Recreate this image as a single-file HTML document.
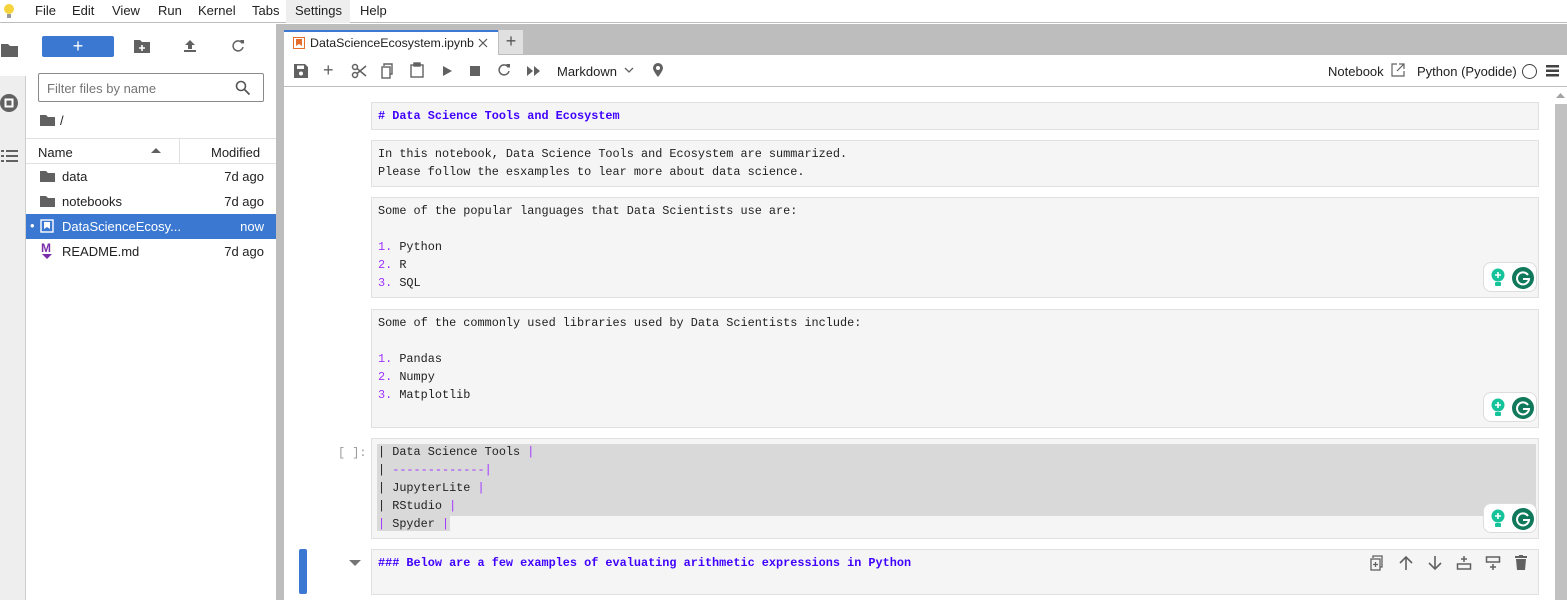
<!DOCTYPE html>
<html><head><meta charset="utf-8"><style>
*{box-sizing:border-box;margin:0;padding:0}
body{width:1567px;height:600px;overflow:hidden;font-family:"Liberation Sans",sans-serif;font-size:13px;color:#212121;background:#fff;position:relative}
.abs{position:absolute}
.menu{left:0;top:0;width:1567px;height:23px;background:#fff;border-bottom:1px solid #bdbdbd}
.menu span{position:absolute;top:3px;font-size:13px}
.mono{font-family:"Liberation Mono",monospace;font-size:11.85px}
.cell{position:absolute;left:371px;width:1168px;background:#f5f5f5;border:1px solid #e0e0e0}
.cell .t{position:absolute;left:6px;top:4px;line-height:18px;white-space:pre}
.h{color:#3f00ff;font-weight:bold}
.n{color:#a033ff}
.g{position:absolute;left:1483px;width:54px;height:30px;background:#fff;border:1px solid #ddd;border-radius:8px}
.file{position:absolute;left:26px;width:250px;height:25px}
.file .nm{position:absolute;left:36px;top:5px}
.file .d{position:absolute;right:12px;top:5px}
</style></head><body>
<div class="abs menu">
 <svg class="abs" style="left:3px;top:3px" width="12" height="16"><circle cx="6" cy="6" r="5" fill="#f5d33a"/><rect x="4" y="11" width="4" height="4" fill="#999"/></svg>
 <span style="left:35px">File</span><span style="left:72px">Edit</span><span style="left:112px">View</span><span style="left:158px">Run</span><span style="left:198px">Kernel</span><span style="left:252px">Tabs</span>
 <span style="left:286px;top:0;height:23px;width:64px;background:#eee;padding:3px 9px">Settings</span><span style="left:360px">Help</span>
</div>
<div class="abs" style="left:0;top:24px;width:26px;height:576px;background:#eeeeee;border-right:1px solid #ccc"></div>
<div class="abs" style="left:0;top:24px;width:26px;height:52px;background:#fff"></div>
<svg class="abs" style="left:0;top:42px" width="20" height="16"><path d="M1 2h7l2 2h8v11H1z" fill="#616161"/></svg>
<svg class="abs" style="left:0;top:92px" width="20" height="22"><circle cx="9" cy="11" r="9" fill="#616161"/><rect x="4.5" y="6.5" width="9" height="9" fill="#fff"/><rect x="6.5" y="8.5" width="5" height="5" fill="#616161"/></svg>
<svg class="abs" style="left:0;top:148px" width="20" height="16" fill="#616161"><rect x="1" y="2" width="3" height="2"/><rect x="6" y="2" width="12" height="2"/><rect x="1" y="7" width="3" height="2"/><rect x="6" y="7" width="12" height="2"/><rect x="1" y="12" width="3" height="2"/><rect x="6" y="12" width="12" height="2"/></svg>
<div class="abs" style="left:26px;top:24px;width:250px;height:576px;background:#fff"></div>
<div class="abs" style="left:42px;top:36px;width:72px;height:21px;background:#3a78d1;border-radius:2px;color:#fff;text-align:center;font-size:18px;line-height:20px">+</div>
<svg class="abs" style="left:134px;top:39px" width="16" height="14"><path d="M0 1h6l2 2h8v11H0z" fill="#616161"/><path d="M8 6v6M5 9h6" stroke="#fff" stroke-width="1.6"/></svg>
<svg class="abs" style="left:183px;top:39px" width="14" height="14" fill="#616161"><path d="M7 1l5 5H9v4H5V6H2z"/><rect x="1" y="11" width="12" height="2"/></svg>
<svg class="abs" style="left:231px;top:39px" width="14" height="14"><path d="M11.5 4.5A5 5 0 1 0 12 8" stroke="#616161" stroke-width="1.5" fill="none"/><path d="M9 1l4 0 0 4z" fill="#616161"/></svg>
<div class="abs" style="left:38px;top:73px;width:226px;height:29px;border:1px solid #8a8a8a;border-radius:2px;color:#757575;padding:7px 8px">Filter files by name</div>
<svg class="abs" style="left:235px;top:80px" width="16" height="16"><circle cx="6" cy="6" r="4.5" stroke="#555" stroke-width="1.6" fill="none"/><path d="M9.5 9.5l5 5" stroke="#555" stroke-width="1.8"/></svg>
<svg class="abs" style="left:40px;top:114px" width="16" height="13"><path d="M0 1h6l2 2h7v9H0z" fill="#616161"/></svg>
<span class="abs" style="left:60px;top:113px">/</span>
<div class="abs" style="left:26px;top:138px;width:250px;height:26px;border-top:1px solid #e0e0e0;border-bottom:1px solid #e0e0e0"></div>
<div class="abs" style="left:179px;top:139px;width:1px;height:24px;background:#e0e0e0"></div>
<span class="abs" style="left:38px;top:145px">Name</span>
<svg class="abs" style="left:151px;top:148px" width="10" height="6"><path d="M0 5l5-5 5 5z" fill="#616161"/></svg>
<span class="abs" style="left:211px;top:145px">Modified</span>
<div class="file" style="top:164px"><svg class="abs" style="left:14px;top:6px" width="16" height="13"><path d="M0 1h6l2 2h7v9H0z" fill="#616161"/></svg><span class="nm">data</span><span class="d">7d ago</span></div>
<div class="file" style="top:189px"><svg class="abs" style="left:14px;top:6px" width="16" height="13"><path d="M0 1h6l2 2h7v9H0z" fill="#616161"/></svg><span class="nm">notebooks</span><span class="d">7d ago</span></div>
<div class="file" style="top:214px;background:#3a78d1;color:#fff"><span class="abs" style="left:4px;top:4px">•</span><svg class="abs" style="left:14px;top:5px" width="14" height="14"><rect x="1" y="1" width="12" height="12" fill="none" stroke="#fff" stroke-width="1.4"/><path d="M4 3h6v7l-3-2-3 2z" fill="#fff"/></svg><span class="nm">DataScienceEcosy...</span><span class="d">now</span></div>
<div class="file" style="top:239px"><span class="abs" style="left:15px;top:2px;color:#7b2ea8;font-weight:bold;font-size:12px">M</span><svg class="abs" style="left:16px;top:15px" width="10" height="6"><path d="M0 0h10l-5 5z" fill="#7b2ea8"/></svg><span class="nm">README.md</span><span class="d">7d ago</span></div>
<div class="abs" style="left:276px;top:24px;width:8px;height:576px;background:#bdbdbd"></div>
<div class="abs" style="left:284px;top:24px;width:1283px;height:31px;background:#bdbdbd"></div>
<div class="abs" style="left:284px;top:30px;width:214px;height:26px;background:#fff;border-top:2px solid #3a78d1"></div>
<svg class="abs" style="left:293px;top:37px" width="12" height="12"><rect x=".5" y=".5" width="11" height="11" fill="none" stroke="#e46e2e"/><path d="M3 2h6v7l-3-2-3 2z" fill="#e46e2e"/></svg>
<span class="abs" style="left:310px;top:36px;font-size:12.4px">DataScienceEcosystem.ipynb</span>
<svg class="abs" style="left:478px;top:38px" width="10" height="10" stroke="#555" stroke-width="1.2"><path d="M1 1l8 8M9 1l-8 8"/></svg>
<div class="abs" style="left:499px;top:30px;width:24px;height:24px;background:#e0e0e0;text-align:center;font-size:18px;line-height:22px;color:#555">+</div>
<div class="abs" style="left:284px;top:55px;width:1283px;height:32px;background:#fff;border-bottom:1px solid #bdbdbd"></div>
<svg class="abs" style="left:294px;top:64px" width="14" height="14"><path d="M0 0h11l3 3v11H0z" fill="#616161"/><rect x="3" y="1.5" width="7" height="3.5" fill="#fff"/><circle cx="7" cy="9.5" r="2" fill="#fff"/></svg>
<span class="abs" style="left:323px;top:60px;font-size:18px;color:#616161">+</span>
<svg class="abs" style="left:351px;top:63px" width="16" height="16" stroke="#616161" stroke-width="1.5" fill="none"><circle cx="4" cy="4" r="2.5"/><circle cx="4" cy="12" r="2.5"/><path d="M6 5.5L15 13M6 10.5L15 3"/></svg>
<svg class="abs" style="left:381px;top:63px" width="14" height="16" stroke="#616161" stroke-width="1.4" fill="none"><path d="M3 3V1h8v10h-2"/><rect x="1" y="4" width="8" height="11"/></svg>
<svg class="abs" style="left:410px;top:62px" width="14" height="16" stroke="#616161" stroke-width="1.4" fill="none"><rect x="1" y="3" width="12" height="12"/><rect x="4" y="1" width="6" height="3" fill="#616161"/></svg>
<svg class="abs" style="left:443px;top:66px" width="9" height="10"><path d="M0 0l9 5-9 5z" fill="#616161"/></svg>
<div class="abs" style="left:470px;top:66px;width:10px;height:10px;background:#616161"></div>
<svg class="abs" style="left:497px;top:63px" width="14" height="14"><path d="M11.5 4.5A5 5 0 1 0 12 8" stroke="#616161" stroke-width="1.5" fill="none"/><path d="M9 1l4 0 0 4z" fill="#616161"/></svg>
<svg class="abs" style="left:527px;top:66px" width="13" height="10" fill="#616161"><path d="M0 0l6 5-6 5zM7 0l6 5-6 5z"/></svg>
<span class="abs" style="left:557px;top:64px">Markdown</span>
<svg class="abs" style="left:624px;top:67px" width="10" height="6"><path d="M1 1l4 4 4-4" stroke="#616161" stroke-width="1.3" fill="none"/></svg>
<svg class="abs" style="left:652px;top:62px" width="12" height="16"><path d="M6 1a5 5 0 0 1 5 5c0 3-5 9-5 9s-5-6-5-9a5 5 0 0 1 5-5z" fill="#616161"/><circle cx="6" cy="6" r="2" fill="#fff"/></svg>
<span class="abs" style="left:1328px;top:64px">Notebook</span>
<svg class="abs" style="left:1391px;top:63px" width="14" height="14" stroke="#616161" stroke-width="1.2" fill="none"><path d="M6 1H1v12h12V8M8 1h5v5M13 1L6 8"/></svg>
<span class="abs" style="left:1417px;top:64px">Python (Pyodide)</span>
<div class="abs" style="left:1522px;top:64px;width:15px;height:15px;border:1.5px solid #424242;border-radius:50%"></div>
<svg class="abs" style="left:1546px;top:65px" width="13" height="12" fill="#424242"><rect y="0" width="13" height="2.5"/><rect y="4.5" width="13" height="2.5"/><rect y="9" width="13" height="2.5"/></svg>
<div class="abs" style="left:1554px;top:88px;width:13px;height:512px;background:#fff"></div>
<svg class="abs" style="left:1556px;top:93px" width="9" height="6"><path d="M0 5l4.5-5 4.5 5z" fill="#a3a3a3"/></svg>
<div class="abs" style="left:1555px;top:104px;width:12px;height:496px;background:#c1c1c1"></div>
<div class="cell mono" style="top:102px;height:28px"><div class="t h">#&nbsp;Data Science Tools and Ecosystem</div></div>
<div class="cell mono" style="top:140px;height:47px"><div class="t">In this notebook, Data Science Tools and Ecosystem are summarized.
Please follow the esxamples to lear more about data science.</div></div>
<div class="cell mono" style="top:197px;height:101px"><div class="t">Some of the popular languages that Data Scientists use are:

<span class="n">1.</span> Python
<span class="n">2.</span> R
<span class="n">3.</span> SQL</div></div>
<div class="cell mono" style="top:309px;height:119px"><div class="t">Some of the commonly used libraries used by Data Scientists include:

<span class="n">1.</span> Pandas
<span class="n">2.</span> Numpy
<span class="n">3.</span> Matplotlib</div></div>
<span class="abs mono" style="left:338px;top:446px;color:#999">[ ]:</span>
<div class="cell mono" style="top:438px;height:101px">
 <div class="abs" style="left:5px;top:5px;width:1159px;height:72px;background:#d9d9d9"></div>
 <div class="abs" style="left:5px;top:77px;width:73px;height:15px;background:#d9d9d9"></div>
 <div class="t">| Data Science Tools <span class="n">|</span>
| <span class="n">-------------|</span>
| JupyterLite <span class="n">|</span>
| RStudio <span class="n">|</span>
<span class="n">|</span> Spyder <span class="n">|</span></div></div>
<div class="abs" style="left:299px;top:549px;width:8px;height:45px;background:#3a78d1;border-radius:2px"></div>
<svg class="abs" style="left:349px;top:560px" width="12" height="7"><path d="M0 0h12l-6 6z" fill="#757575"/></svg>
<div class="cell mono" style="top:549px;height:46px"><div class="t h">### Below are a few examples of evaluating arithmetic expressions in Python</div></div>
<svg class="abs" style="left:1370px;top:555px" width="14" height="16" stroke="#616161" stroke-width="1.3" fill="none"><path d="M3 3V1h9v11h-2"/><rect x="1" y="4" width="9" height="11"/><path d="M5.5 7v5M3 9.5h5"/></svg>
<svg class="abs" style="left:1399px;top:555px" width="14" height="16" stroke="#616161" stroke-width="1.6" fill="none"><path d="M7 15V2M1 8l6-6 6 6"/></svg>
<svg class="abs" style="left:1428px;top:555px" width="14" height="16" stroke="#616161" stroke-width="1.6" fill="none"><path d="M7 1v13M1 8l6 6 6-6"/></svg>
<svg class="abs" style="left:1456px;top:555px" width="16" height="16" stroke="#616161" stroke-width="1.5" fill="none"><rect x="1.5" y="9" width="13" height="5"/><path d="M8 1v6M5 4h6"/></svg>
<svg class="abs" style="left:1485px;top:555px" width="16" height="16" stroke="#616161" stroke-width="1.5" fill="none"><rect x="1.5" y="2" width="13" height="5"/><path d="M8 9v6M5 12h6"/></svg>
<svg class="abs" style="left:1515px;top:555px" width="12" height="15" fill="#616161"><rect x="0" y="1" width="12" height="2"/><rect x="4" y="0" width="4" height="2"/><path d="M1 4h10l-1 11H2z"/></svg>
<div class="g" style="top:262px"></div><div class="g" style="top:392px"></div><div class="g" style="top:503px"></div>
<svg class="abs" style="left:1488px;top:267px" width="48" height="22"><circle cx="10" cy="8" r="6.5" fill="#15c39a"/><rect x="7" y="15" width="6" height="4" rx="1" fill="#15c39a"/><path d="M10 5v6M7 8h6" stroke="#fff" stroke-width="1.6"/><circle cx="35" cy="11" r="11" fill="#11795b"/><path d="M40 8a6 6 0 1 0 1 4h-6" stroke="#fff" stroke-width="2" fill="none"/></svg>
<svg class="abs" style="left:1488px;top:397px" width="48" height="22"><circle cx="10" cy="8" r="6.5" fill="#15c39a"/><rect x="7" y="15" width="6" height="4" rx="1" fill="#15c39a"/><path d="M10 5v6M7 8h6" stroke="#fff" stroke-width="1.6"/><circle cx="35" cy="11" r="11" fill="#11795b"/><path d="M40 8a6 6 0 1 0 1 4h-6" stroke="#fff" stroke-width="2" fill="none"/></svg>
<svg class="abs" style="left:1488px;top:508px" width="48" height="22"><circle cx="10" cy="8" r="6.5" fill="#15c39a"/><rect x="7" y="15" width="6" height="4" rx="1" fill="#15c39a"/><path d="M10 5v6M7 8h6" stroke="#fff" stroke-width="1.6"/><circle cx="35" cy="11" r="11" fill="#11795b"/><path d="M40 8a6 6 0 1 0 1 4h-6" stroke="#fff" stroke-width="2" fill="none"/></svg>
</body></html>
